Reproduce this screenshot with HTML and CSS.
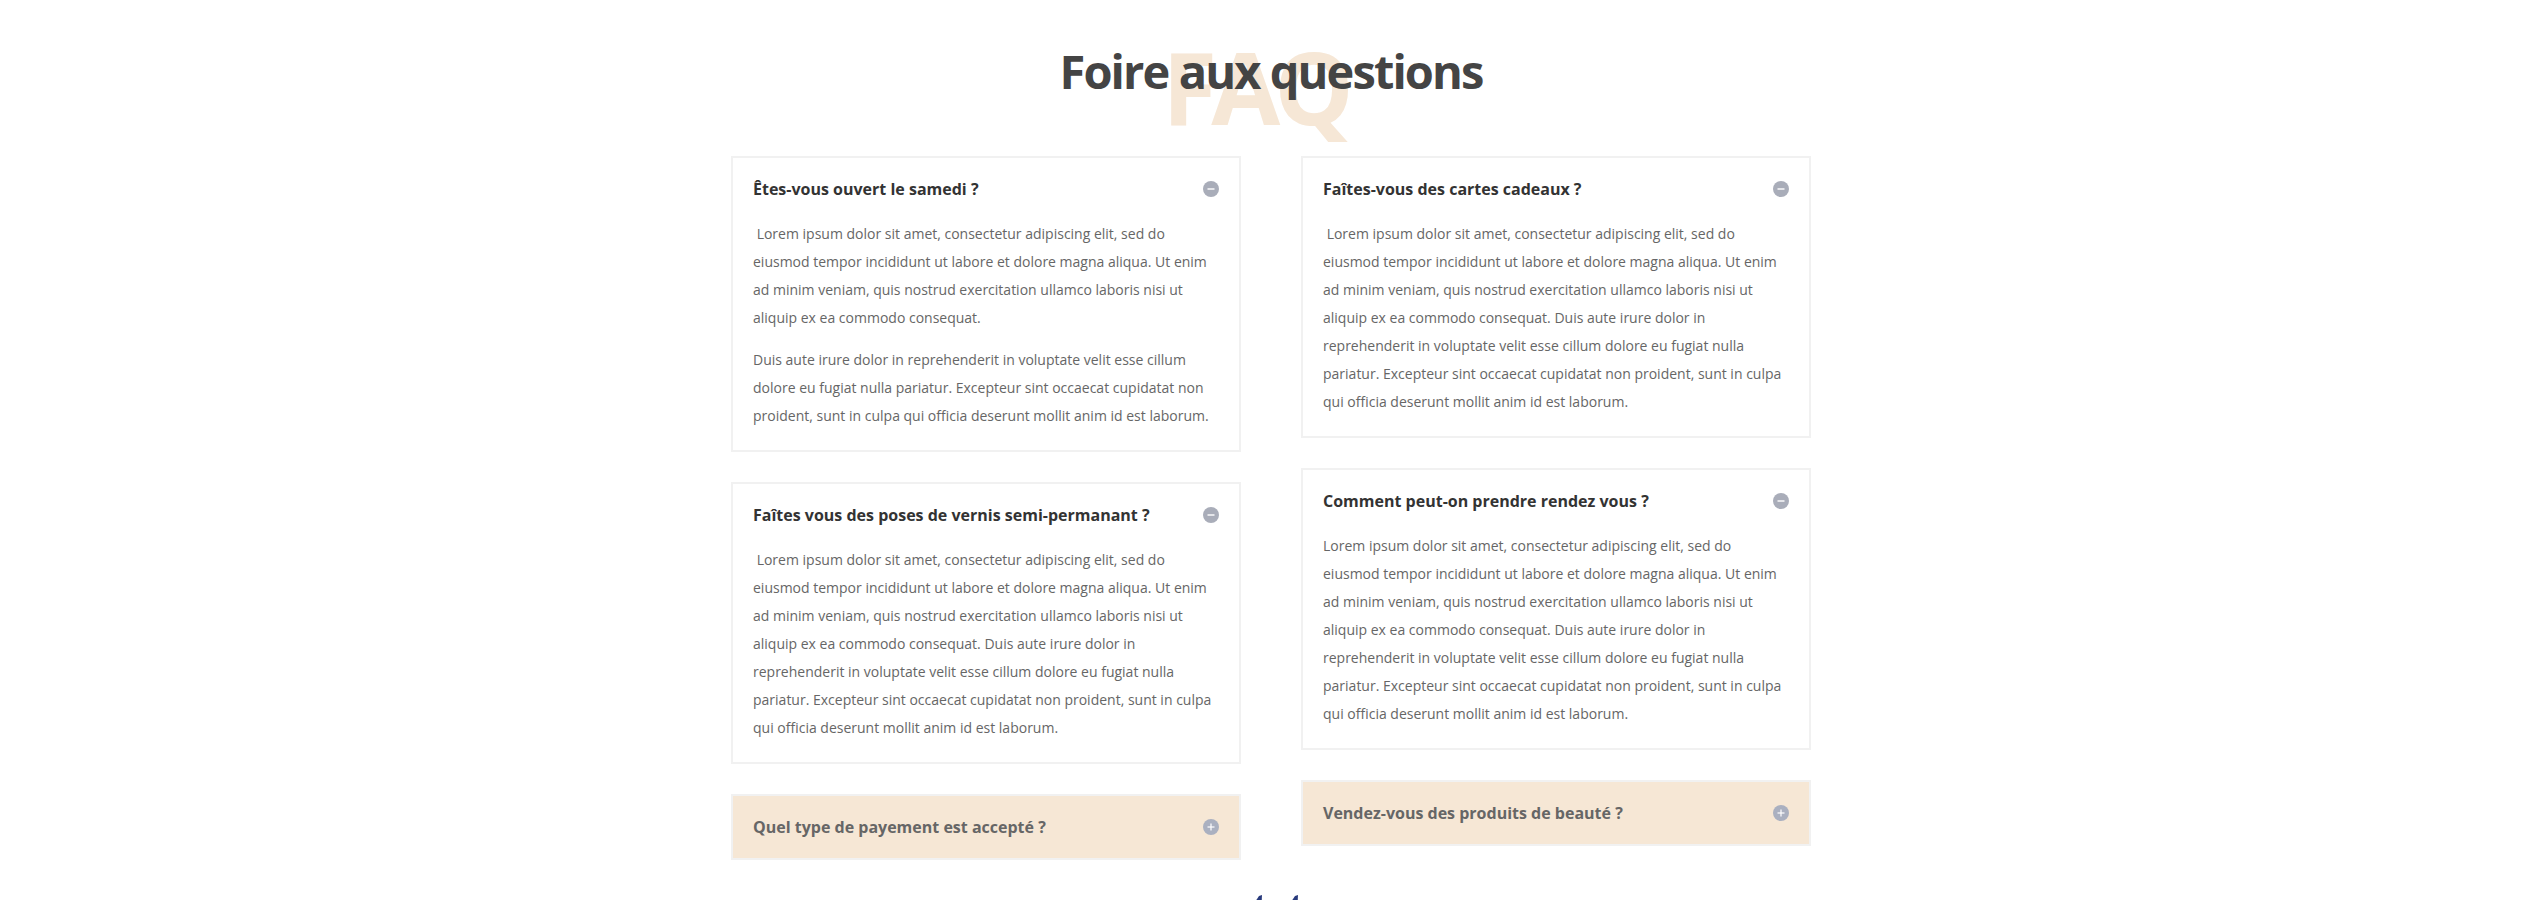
FILE: index.html
```html
<!DOCTYPE html>
<html lang="fr">
<head>
<meta charset="utf-8">
<title>Foire aux questions</title>
<link rel="stylesheet" href="styles.css">
</head>
<body>
<section class="faq-section">
  <div class="faq-head">
    <span class="faq-bg" aria-hidden="true">FAQ</span>
    <h2 class="faq-title">Foire aux questions</h2>
  </div>
  <div class="faq-grid">
    <div class="faq-col">
      <div class="toggle open">
        <div class="toggle-head">
          <h5 class="toggle-title">Êtes-vous ouvert le samedi ?</h5>
          <svg class="toggle-icon" width="16" height="16" viewBox="0 0 16 16"><circle cx="8" cy="8" r="8" fill="#a9adb9"/><line x1="4.5" y1="8" x2="11.5" y2="8" stroke="#fff" stroke-width="1.4"/></svg>
        </div>
        <div class="toggle-content">
          <p>&nbsp;Lorem ipsum dolor sit amet, consectetur adipiscing elit, sed do eiusmod tempor incididunt ut labore et dolore magna aliqua. Ut enim ad minim veniam, quis nostrud exercitation ullamco laboris nisi ut aliquip ex ea commodo consequat.</p>
          <p>Duis aute irure dolor in reprehenderit in voluptate velit esse cillum dolore eu fugiat nulla pariatur. Excepteur sint occaecat cupidatat non proident, sunt in culpa qui officia deserunt mollit anim id est laborum.</p>
        </div>
      </div>
      <div class="toggle open">
        <div class="toggle-head">
          <h5 class="toggle-title">Faîtes vous des poses de vernis semi-permanant ?</h5>
          <svg class="toggle-icon" width="16" height="16" viewBox="0 0 16 16"><circle cx="8" cy="8" r="8" fill="#a9adb9"/><line x1="4.5" y1="8" x2="11.5" y2="8" stroke="#fff" stroke-width="1.4"/></svg>
        </div>
        <div class="toggle-content">
          <p>&nbsp;Lorem ipsum dolor sit amet, consectetur adipiscing elit, sed do eiusmod tempor incididunt ut labore et dolore magna aliqua. Ut enim ad minim veniam, quis nostrud exercitation ullamco laboris nisi ut aliquip ex ea commodo consequat. Duis aute irure dolor in reprehenderit in voluptate velit esse cillum dolore eu fugiat nulla pariatur. Excepteur sint occaecat cupidatat non proident, sunt in culpa qui officia deserunt mollit anim id est laborum.</p>
        </div>
      </div>
      <div class="toggle closed">
        <div class="toggle-head">
          <h5 class="toggle-title">Quel type de payement est accepté ?</h5>
          <svg class="toggle-icon" width="16" height="16" viewBox="0 0 16 16"><circle cx="8" cy="8" r="8" fill="#aab0c0"/><line x1="4.5" y1="8" x2="11.5" y2="8" stroke="#fff" stroke-width="1.2"/><line x1="8" y1="4.5" x2="8" y2="11.5" stroke="#fff" stroke-width="1.2"/></svg>
        </div>
      </div>
    </div>
    <div class="faq-col">
      <div class="toggle open">
        <div class="toggle-head">
          <h5 class="toggle-title">Faîtes-vous des cartes cadeaux ?</h5>
          <svg class="toggle-icon" width="16" height="16" viewBox="0 0 16 16"><circle cx="8" cy="8" r="8" fill="#a9adb9"/><line x1="4.5" y1="8" x2="11.5" y2="8" stroke="#fff" stroke-width="1.4"/></svg>
        </div>
        <div class="toggle-content">
          <p>&nbsp;Lorem ipsum dolor sit amet, consectetur adipiscing elit, sed do eiusmod tempor incididunt ut labore et dolore magna aliqua. Ut enim ad minim veniam, quis nostrud exercitation ullamco laboris nisi ut aliquip ex ea commodo consequat. Duis aute irure dolor in reprehenderit in voluptate velit esse cillum dolore eu fugiat nulla pariatur. Excepteur sint occaecat cupidatat non proident, sunt in culpa qui officia deserunt mollit anim id est laborum.</p>
        </div>
      </div>
      <div class="toggle open">
        <div class="toggle-head">
          <h5 class="toggle-title">Comment peut-on prendre rendez vous ?</h5>
          <svg class="toggle-icon" width="16" height="16" viewBox="0 0 16 16"><circle cx="8" cy="8" r="8" fill="#a9adb9"/><line x1="4.5" y1="8" x2="11.5" y2="8" stroke="#fff" stroke-width="1.4"/></svg>
        </div>
        <div class="toggle-content">
          <p>Lorem ipsum dolor sit amet, consectetur adipiscing elit, sed do eiusmod tempor incididunt ut labore et dolore magna aliqua. Ut enim ad minim veniam, quis nostrud exercitation ullamco laboris nisi ut aliquip ex ea commodo consequat. Duis aute irure dolor in reprehenderit in voluptate velit esse cillum dolore eu fugiat nulla pariatur. Excepteur sint occaecat cupidatat non proident, sunt in culpa qui officia deserunt mollit anim id est laborum.</p>
        </div>
      </div>
      <div class="toggle closed">
        <div class="toggle-head">
          <h5 class="toggle-title">Vendez-vous des produits de beauté ?</h5>
          <svg class="toggle-icon" width="16" height="16" viewBox="0 0 16 16"><circle cx="8" cy="8" r="8" fill="#aab0c0"/><line x1="4.5" y1="8" x2="11.5" y2="8" stroke="#fff" stroke-width="1.2"/><line x1="8" y1="4.5" x2="8" y2="11.5" stroke="#fff" stroke-width="1.2"/></svg>
        </div>
      </div>
    </div>
  </div>
  <div class="faq-foot">
    <svg class="foot-logo" width="60" height="20" viewBox="0 0 60 20"><path d="M2 20 L14 2 L17 1 L16 20 Z" fill="#283a7c"/><path d="M38 20 L50 2 L53 1 L52 20 Z" fill="#283a7c"/></svg>
  </div>
</section>
</body>
</html>
```
FILE: styles.css
```css
html, body {
  margin: 0;
  padding: 0;
  background: #ffffff;
}

body {
  font-family: "Open Sans", "Liberation Sans", sans-serif;
  font-size: 14px;
  color: #666666;
}

.faq-section {
  padding-top: 47px;
  overflow: hidden;
  height: 900px;
  box-sizing: border-box;
}

.faq-head {
  position: relative;
  text-align: center;
  width: 1080px;
  margin: 0 auto;
}

.faq-bg {
  position: absolute;
  left: 0;
  right: 0;
  top: -11px;
  text-align: center;
  padding-right: 32px;
  font-size: 100px;
  line-height: 100px;
  font-weight: 700;
  letter-spacing: -6px;
  color: #f6e7d6;
  z-index: 0;
  user-select: none;
}

.faq-title {
  position: relative;
  z-index: 1;
  margin: 0;
  font-size: 47px;
  line-height: 48px;
  font-weight: 700;
  letter-spacing: -1.9px;
  color: #444444;
}

.faq-grid {
  width: 1080px;
  margin: 61px auto 0;
  display: grid;
  grid-template-columns: 510px 510px;
  column-gap: 60px;
  align-items: start;
}

.faq-col {
  display: flex;
  flex-direction: column;
  gap: 30px;
}

.toggle {
  border: 2px solid #f1f1f1;
  padding: 20px;
  background: #ffffff;
}

.toggle.closed {
  background: #f6e7d5;
}

.toggle-head {
  display: flex;
  align-items: center;
  justify-content: space-between;
  gap: 16px;
}

.toggle-title {
  margin: 0;
  font-size: 16px;
  line-height: 22px;
  font-weight: 700;
  color: #333333;
}

.toggle.closed .toggle-title {
  color: #666666;
}

.toggle-icon {
  flex: 0 0 16px;
  display: block;
}

.toggle-content {
  padding-top: 20px;
}

.toggle-content p {
  margin: 0;
  line-height: 28px;
  padding-bottom: 14px;
}

.toggle-content p:last-child {
  padding-bottom: 0;
}

.faq-foot {
  display: flex;
  justify-content: center;
  margin-top: 34px;
}

.foot-logo {
  display: block;
  margin-left: 8px;
}
```
